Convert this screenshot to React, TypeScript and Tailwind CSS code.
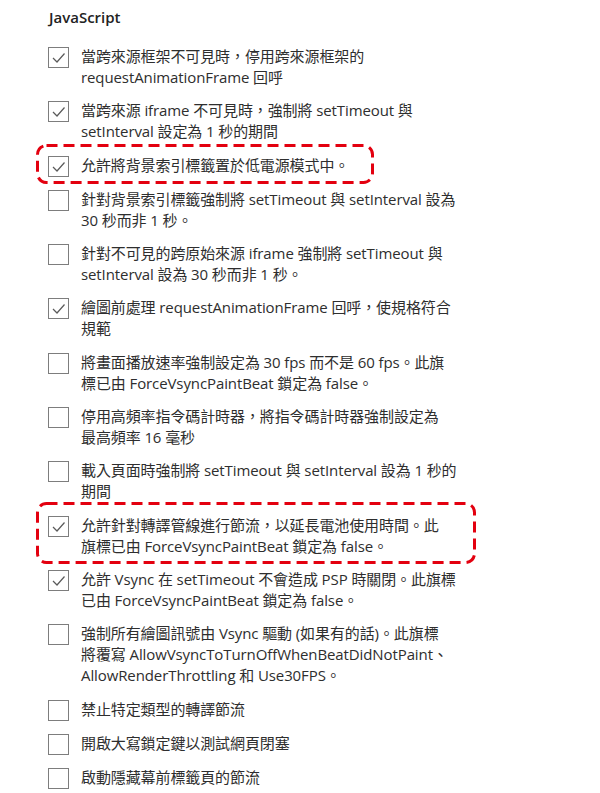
import React from 'react';

type Flag = {
  lines: string[];
  checked: boolean;
  mark?: 'short' | 'long';
};

const flags: Flag[] = [
  { lines: ['當跨來源框架不可見時，停用跨來源框架的', 'requestAnimationFrame 回呼'], checked: true },
  { lines: ['當跨來源 iframe 不可見時，強制將 setTimeout 與', 'setInterval 設定為 1 秒的期間'], checked: true },
  { lines: ['允許將背景索引標籤置於低電源模式中。'], checked: true, mark: 'short' },
  { lines: ['針對背景索引標籤強制將 setTimeout 與 setInterval 設為', '30 秒而非 1 秒。'], checked: false },
  { lines: ['針對不可見的跨原始來源 iframe 強制將 setTimeout 與', 'setInterval 設為 30 秒而非 1 秒。'], checked: false },
  { lines: ['繪圖前處理 requestAnimationFrame 回呼，使規格符合', '規範'], checked: true },
  { lines: ['將畫面播放速率強制設定為 30 fps 而不是 60 fps。此旗', '標已由 ForceVsyncPaintBeat 鎖定為 false。'], checked: false },
  { lines: ['停用高頻率指令碼計時器，將指令碼計時器強制設定為', '最高頻率 16 毫秒'], checked: false },
  { lines: ['載入頁面時強制將 setTimeout 與 setInterval 設為 1 秒的', '期間'], checked: false },
  { lines: ['允許針對轉譯管線進行節流，以延長電池使用時間。此', '旗標已由 ForceVsyncPaintBeat 鎖定為 false。'], checked: true, mark: 'long' },
  { lines: ['允許 Vsync 在 setTimeout 不會造成 PSP 時關閉。此旗標', '已由 ForceVsyncPaintBeat 鎖定為 false。'], checked: true },
  {
    lines: [
      '強制所有繪圖訊號由 Vsync 驅動 (如果有的話)。此旗標',
      '將覆寫 AllowVsyncToTurnOffWhenBeatDidNotPaint、',
      'AllowRenderThrottling 和 Use30FPS。',
    ],
    checked: false,
  },
  { lines: ['禁止特定類型的轉譯節流'], checked: false },
  { lines: ['開啟大寫鎖定鍵以測試網頁閉塞'], checked: false },
  { lines: ['啟動隱藏幕前標籤頁的節流'], checked: false },
];

function CheckBox({ checked }: { checked: boolean }) {
  return (
    <div className="w-[21px] h-[21px] mt-[1px] shrink-0 border border-[#7d7d7d] bg-white flex items-center justify-center">
      {checked && (
        <svg width="19" height="19" viewBox="0 0 19 19" fill="none">
          <path d="M4 10 L8 14 L15.5 5.5" stroke="#5a5a5a" strokeWidth="1.2" />
        </svg>
      )}
    </div>
  );
}

// red dashed highlight drawn over a row
function DashedFrame({ width, height }: { width: number; height: number }) {
  return (
    <svg
      className="absolute pointer-events-none"
      style={{ left: -12, top: height > 50 ? -13 : -11 }}
      width={width}
      height={height}
      viewBox={`0 0 ${width} ${height}`}
      fill="none"
    >
      <rect
        x="1.5"
        y="1.5"
        width={width - 3}
        height={height - 3}
        rx="9"
        stroke="#e3000f"
        strokeWidth="3"
        strokeDasharray="11 6"
      />
    </svg>
  );
}

export default function App() {
  return (
    <div
      className="min-h-screen bg-white pl-[48px] pt-[7px] text-[15px] text-[#2e2e2e]"
      style={{ fontFamily: '"Open Sans", "Noto Sans CJK TC", sans-serif' }}
    >
      <h2 className="text-[15px] leading-[21px] font-semibold text-[#222] pl-[1px] mb-[18px]">JavaScript</h2>

      <div className="flex flex-col gap-[12.3px]">
        {flags.map((flag, i) => (
          <div key={i} className="relative flex items-start gap-[12px]">
            {flag.mark === 'short' && <DashedFrame width={338} height={40} />}
            {flag.mark === 'long' && <DashedFrame width={440} height={62} />}
            <CheckBox checked={flag.checked} />
            <div className="leading-[21px] tracking-[-0.1px]">
              {flag.lines.map((line, j) => (
                <div key={j} className="whitespace-nowrap">
                  {line}
                </div>
              ))}
            </div>
          </div>
        ))}
      </div>
    </div>
  );
}
